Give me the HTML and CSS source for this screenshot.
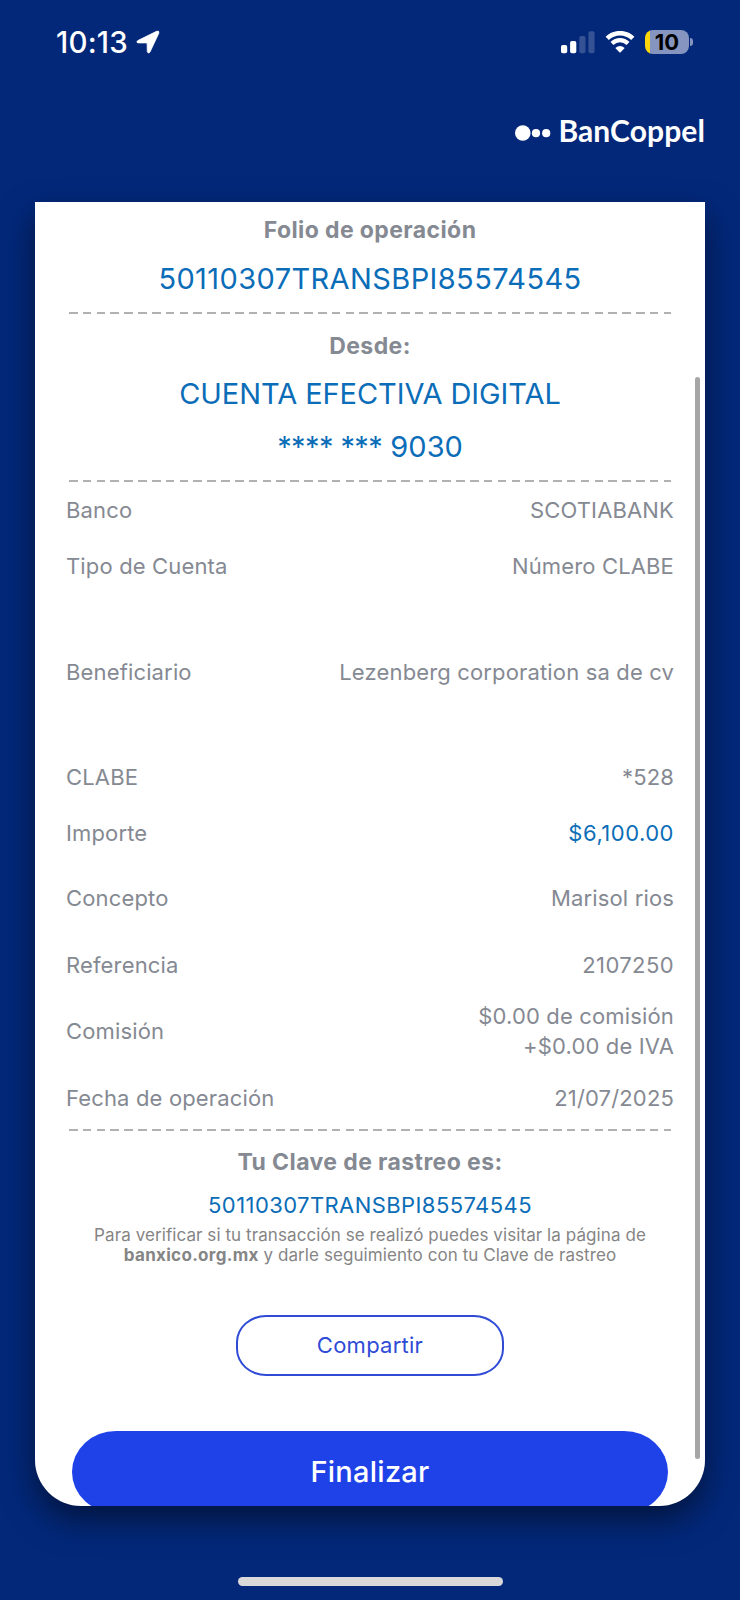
FILE: index.html
```
<!DOCTYPE html>
<html lang="es">
<head>
    <meta charset="UTF-8">
    <meta name="viewport" content="width=device-width, initial-scale=1.0">
    <title>BanCoppel</title>
    <link rel="stylesheet" href="styles.css">
</head>
<body>
    <div class="status-bar">
        <div class="status-left">
            <span class="time">10:13</span>
            <svg class="location" width="24" height="24" viewBox="0 0 24 24">
                <path d="M1.8 10.6 L20.6 1.3 Q23.6 0.4 22.8 3.2 L14 22 Q12.3 24.4 11.3 21.6 L11.1 13.6 Q11.1 12.9 10.4 12.9 L2.2 12.9 Q-0.4 12.4 1.8 10.6 Z" fill="white" stroke="white" stroke-width="0.8" stroke-linejoin="round"/>
            </svg>
        </div>
        <div class="status-right">
            <svg class="signal" width="34" height="23" viewBox="0 0 34 23">
                <rect x="0" y="13.9" width="6.2" height="8.3" rx="1.8" fill="white"/>
                <rect x="9.1" y="10" width="6.2" height="12.2" rx="1.8" fill="white"/>
                <rect x="18.3" y="5" width="6.2" height="17.2" rx="1.8" fill="white" opacity="0.2"/>
                <rect x="27.4" y="0.3" width="6.2" height="21.9" rx="1.8" fill="white" opacity="0.2"/>
            </svg>
            <svg class="wifi" width="30" height="22" viewBox="0 0 30 22">
                <path d="M2.2 7.4 A18.3 18.3 0 0 1 27.8 7.4" fill="none" stroke="white" stroke-width="4.6"/>
                <path d="M7 12.4 A11.5 11.5 0 0 1 23 12.4" fill="none" stroke="white" stroke-width="4.2"/>
                <path d="M10.3 17 Q15 12.8 19.7 17 L15.6 21.2 Q15 21.8 14.4 21.2 Z" fill="white"/>
            </svg>
            <div class="battery"><span>10</span></div>
            <div class="battery-tip"></div>
        </div>
    </div>

    <div class="brand">
        <svg width="36" height="16" viewBox="0 0 36 16">
            <circle cx="7.8" cy="8" r="7.8" fill="white"/>
            <circle cx="21" cy="8.2" r="4.1" fill="white"/>
            <circle cx="31.2" cy="8.2" r="4.1" fill="white"/>
        </svg>
        <span class="brand-name">BanCoppel</span>
    </div>

    <div class="card">
        <div class="section folio">
            <h2>Folio de operación</h2>
            <p class="big">50110307TRANSBPI85574545</p>
        </div>
        <div class="divider"></div>
        <div class="section from">
            <h2>Desde:</h2>
            <p class="big account">CUENTA EFECTIVA DIGITAL</p>
            <p class="big number"><span class="mask">**** ***</span> 9030</p>
        </div>
        <div class="divider"></div>

        <div class="details">
            <div class="row"><span>Banco</span><span>SCOTIABANK</span></div>
            <div class="row"><span>Tipo de Cuenta</span><span>Número CLABE</span></div>
            <div class="row row-tall"><span>Beneficiario</span><span>Lezenberg corporation sa de cv</span></div>
            <div class="row"><span>CLABE</span><span>*528</span></div>
            <div class="row"><span>Importe</span><span class="amount">$6,100.00</span></div>
            <div class="row row-wide first"><span>Concepto</span><span>Marisol rios</span></div>
            <div class="row row-wide"><span>Referencia</span><span class="reference">2107250</span></div>
            <div class="row row-wide"><span>Comisión</span><span>$0.00 de comisión<br>+$0.00 de IVA</span></div>
            <div class="row row-wide"><span>Fecha de operación</span><span>21/07/2025</span></div>
        </div>
        <div class="divider"></div>

        <div class="section tracking">
            <h2>Tu Clave de rastreo es:</h2>
            <p class="code">50110307TRANSBPI85574545</p>
            <p class="note">Para verificar si tu transacción se realizó puedes visitar la página de<br><b>banxico.org.mx</b> y darle seguimiento con tu Clave de rastreo</p>
        </div>

        <button class="share">Compartir</button>
        <button class="finish">Finalizar</button>
        <div class="scrollbar"></div>
    </div>

    <div class="home-bar"></div>
</body>
</html>
```
FILE: styles.css
```
* {
    box-sizing: border-box;
}
body {
    margin: 0;
    width: 740px;
    height: 1600px;
    overflow: hidden;
    background-color: #03287a;
    font-family: Inter, "Liberation Sans", sans-serif;
    color: #858992;
}
h2, p {
    margin: 0;
}
.status-bar {
    display: flex;
    justify-content: space-between;
    align-items: center;
    height: 84px;
    padding: 0 47px 0 56px;
    color: white;
}
.status-left, .status-right {
    display: flex;
    align-items: center;
}
.time {
    font-size: 29.5px;
    font-weight: 500;
    letter-spacing: 0.2px;
}
.location {
    margin-left: 8px;
}
.wifi {
    margin-left: 10px;
}
.battery {
    display: flex;
    justify-content: center;
    align-items: center;
    width: 44px;
    height: 24px;
    margin-left: 10px;
    border-radius: 8px;
    background: linear-gradient(to right, #fdd60a 5px, #8595bf 5px);
    color: black;
    font-size: 22px;
    font-weight: 700;
    line-height: 24px;
}
.battery-tip {
    width: 3px;
    height: 8px;
    margin-left: 1px;
    border-radius: 0 4px 4px 0;
    background-color: #8595bf;
}
.brand {
    display: flex;
    justify-content: flex-end;
    align-items: center;
    height: 46px;
    margin-top: 25px;
    padding-right: 35px;
    color: white;
}
.brand svg {
    margin-top: 2px;
}
.brand-name {
    margin-left: 7px;
    font-family: Lato, sans-serif;
    font-size: 30px;
    font-weight: 700;
    line-height: 42px;
    letter-spacing: 0.1px;
    padding-bottom: 4px;
}
.card {
    position: relative;
    width: 670px;
    height: 1304px;
    margin: 47px 0 0 35px;
    padding: 0 31px;
    overflow: hidden;
    border-radius: 0 0 46px 46px;
    background-color: white;
    box-shadow: 0 14px 32px rgba(0, 0, 0, 0.5);
}
.section {
    text-align: center;
}
h2 {
    font-size: 23px;
    font-weight: 700;
    line-height: 30px;
    letter-spacing: 0.4px;
}
.big {
    color: #0b6db7;
    font-size: 29px;
    line-height: 40px;
}
.folio {
    height: 110px;
    padding-top: 13px;
}
.folio .big {
    margin-top: 14px;
    letter-spacing: 0.4px;
}
.from {
    height: 166px;
    padding-top: 17px;
}
.from .account {
    margin-top: 13px;
    letter-spacing: -0.07px;
}
.from .number {
    margin-top: 13px;
}
.number .mask {
    letter-spacing: -0.6px;
}
.divider {
    height: 2px;
    margin: 0 3px;
    background: repeating-linear-gradient(to right, #b1b1b1 0, #b1b1b1 8.6px, white 8.6px, white 13.83px);
}
.details {
    height: 647px;
}
.row {
    display: flex;
    justify-content: space-between;
    align-items: center;
    height: 56px;
    font-size: 22px;
    line-height: 30px;
    letter-spacing: 0.15px;
    text-align: right;
}
.row-tall {
    height: 155px;
}
.row-wide {
    height: 66.5px;
}
.row-wide.first {
    margin-top: 4px;
}
.amount {
    color: #0b6db7;
    letter-spacing: 0.5px;
}
.reference {
    letter-spacing: 0.4px;
}
.tracking {
    padding-top: 16px;
}
.code {
    margin-top: 13px;
    color: #0b6db7;
    font-size: 22px;
    line-height: 30px;
    letter-spacing: 0.42px;
}
.note {
    margin-top: 5px;
    color: #858585;
    font-size: 17px;
    line-height: 20px;
    letter-spacing: 0.08px;
}
.note b {
    letter-spacing: 0.3px;
}
.share, .finish {
    display: block;
    margin: 0 auto;
    font-family: inherit;
    letter-spacing: 0.25px;
}
.share {
    width: 268px;
    height: 61px;
    margin-top: 50px;
    padding: 0 0 1px;
    border: 2px solid #2f4bd6;
    border-radius: 30px / 27px;
    background-color: white;
    color: #2f4bd6;
    font-size: 22px;
}
.finish {
    width: 596px;
    height: 82px;
    margin-top: 55px;
    margin-left: 6px;
    padding: 0 0 2px;
    border: none;
    border-radius: 44px / 41px;
    background-color: #1f42e8;
    color: white;
    font-size: 29px;
    font-weight: 500;
}
.scrollbar {
    position: absolute;
    top: 175px;
    right: 5px;
    width: 5px;
    height: 1082px;
    border-radius: 3px;
    background-color: #a6a6a6;
}
.home-bar {
    width: 265px;
    height: 9px;
    margin: 71px auto 0;
    border-radius: 5px;
    background-color: #d9d9d9;
}
```
